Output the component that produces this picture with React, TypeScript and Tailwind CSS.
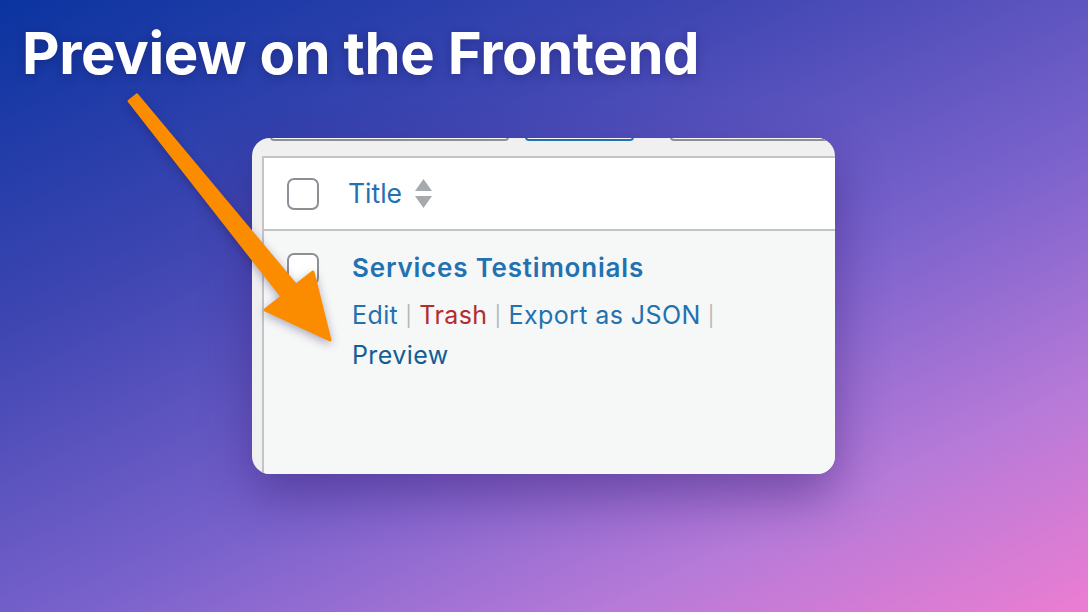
import React from "react";

export default function App() {
  const sans = { fontFamily: "Inter, 'Noto Sans', 'Liberation Sans', sans-serif" };
  return (
    <div
      className="relative w-[1088px] h-[612px] overflow-hidden bg-[linear-gradient(155deg,#0a34a0_0%,#3f46b2_30%,#7a62cc_58%,#b77ad8_80%,#ec7dd2_100%)]"
      style={sans}
    >
      <div className="flex flex-col">
        <h1 className="ml-[22px] mt-[18px] text-[58px] leading-[70px] font-bold text-white tracking-[-0.4px] [text-shadow:0_2px_10px_rgba(20,20,80,0.35)]">
          Preview on the Frontend
        </h1>

        <div className="ml-[252px] mt-[50px] w-[583px] h-[336px] rounded-[18px] overflow-hidden bg-[#f0f0f1] shadow-[0_22px_50px_rgba(50,25,110,0.45)] flex flex-col">
          {/* clipped tabs strip */}
          <div className="h-[18px] flex items-start pl-[18px] overflow-hidden">
            <div className="w-[246px] h-[8px] -mt-[5px] rounded-[5px] border-2 border-[#8c8f94] bg-[#f6f7f7]" />
            <div className="ml-[16px] w-[112px] h-[8px] -mt-[5px] rounded-[5px] border-2 border-[#2271b1] bg-[#f6f7f7]" />
            <div className="ml-[36px] w-[170px] h-[8px] -mt-[5px] rounded-[5px] border-2 border-[#8c8f94] bg-[#f6f7f7]" />
          </div>

          {/* table */}
          <div className="ml-[10px] flex-1 flex flex-col border-l-2 border-t-2 border-[#c3c4c7]">
            <div className="h-[73px] bg-white border-b-2 border-[#c3c4c7] flex items-center">
              <div className="ml-[23px] w-[32px] h-[32px] rounded-[7px] border-2 border-[#8c8f94] bg-white" />
              <span className="ml-[29px] text-[26.5px] text-[#2271b1] leading-none">Title</span>
              <svg className="ml-[13px]" width="17" height="30" viewBox="0 0 17 30">
                <path d="M8.5 0 L17 12 L0 12 Z" fill="#a7aaad" />
                <path d="M0 17 L17 17 L8.5 29 Z" fill="#a7aaad" />
              </svg>
            </div>
            <div className="flex-1 bg-[#f6f7f7] flex items-start">
              <div className="ml-[23px] mt-[22px] w-[32px] h-[32px] rounded-[7px] border-2 border-[#8c8f94] bg-white" />
              <div className="ml-[33px] mt-[20px] flex flex-col">
                <span className="text-[26px] tracking-[0.8px] font-semibold text-[#2271b1] leading-[34px]">
                  Services Testimonials
                </span>
                <div className="mt-[11px] text-[25px] tracking-[0.4px] leading-[38px] w-[400px]">
                  <span className="text-[#2271b1]">Edit</span>
                  <span className="text-[#b4b6b9] text-[20px] px-[1px] relative -top-[1px]"> | </span>
                  <span className="text-[#b32d2e]">Trash</span>
                  <span className="text-[#b4b6b9] text-[20px] px-[1px] relative -top-[1px]"> | </span>
                  <span className="text-[#2271b1]">Export as JSON</span>
                  <span className="text-[#b4b6b9] text-[20px] px-[1px] relative -top-[1px]"> | </span>
                  <br />
                  <span className="text-[#135e96]">Preview</span>
                </div>
              </div>
            </div>
          </div>
        </div>
      </div>

      {/* arrow overlay */}
      <svg
        className="absolute left-0 top-0 pointer-events-none"
        width="1088"
        height="612"
        viewBox="0 0 1088 612"
        style={{ filter: "drop-shadow(0 3px 5px rgba(30,20,80,0.35))" }}
      >
        <polygon
          points="129.1,101.1 136.9,94.9 296,285.3 313,272 330,340 265,310 282,296.7"
          fill="#fb8c00"
          stroke="#fb8c00"
          strokeWidth="3"
          strokeLinejoin="round"
        />
      </svg>
    </div>
  );
}
